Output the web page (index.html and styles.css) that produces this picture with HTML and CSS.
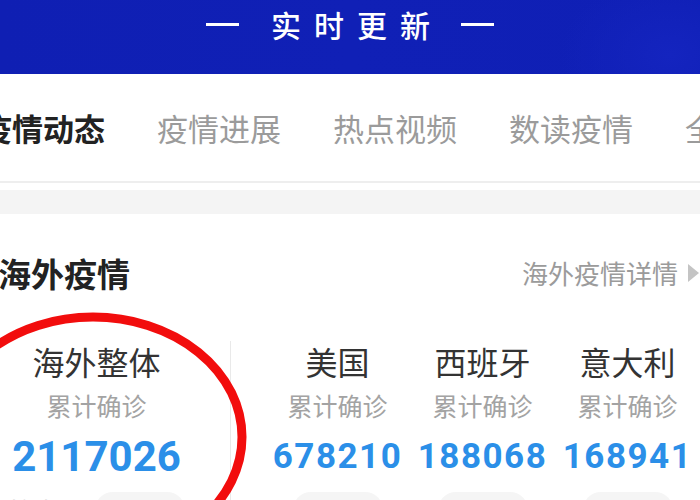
FILE: index.html
```html
<!DOCTYPE html>
<html lang="zh-CN">
<head>
<meta charset="utf-8">
<title>实时更新</title>
<link rel="stylesheet" href="styles.css">
</head>
<body>
<div class="page">
  <header class="banner">
    <span class="dash"></span>
    <span class="banner-text">实时更新</span>
    <span class="dash"></span>
  </header>

  <nav class="tabs">
    <span class="tab active">疫情动态</span>
    <span class="tab">疫情进展</span>
    <span class="tab">热点视频</span>
    <span class="tab">数读疫情</span>
    <span class="tab">全部</span>
  </nav>

  <div class="band"></div>

  <section class="overseas">
    <div class="title-row">
      <h2 class="title">海外疫情</h2>
      <a class="more">海外疫情详情<span class="tri"></span></a>
    </div>

    <div class="stats">
      <div class="col main">
        <div class="name">海外整体</div>
        <div class="sub">累计确诊</div>
        <div class="num big">2117026</div>
        <div class="delta-row"><span class="delta-label">较昨日</span><span class="pill"></span></div>
      </div>
      <div class="countries">
        <div class="col">
          <div class="name">美国</div>
          <div class="sub">累计确诊</div>
          <div class="num">678210</div>
          <div class="delta-row"><span class="pill"></span></div>
        </div>
        <div class="col">
          <div class="name">西班牙</div>
          <div class="sub">累计确诊</div>
          <div class="num">188068</div>
          <div class="delta-row"><span class="pill"></span></div>
        </div>
        <div class="col">
          <div class="name">意大利</div>
          <div class="sub">累计确诊</div>
          <div class="num">168941</div>
          <div class="delta-row"><span class="pill"></span></div>
        </div>
      </div>
    </div>

    <svg class="circle" width="320" height="260" viewBox="0 0 320 260" aria-hidden="true">
      <ellipse cx="121" cy="125" rx="149" ry="120" fill="none" stroke="#f20d0d" stroke-width="9"/>
    </svg>
  </section>
</div>
</body>
</html>
```

FILE: styles.css
```css
* { box-sizing: border-box; }
html, body {
  margin: 0;
  padding: 0;
  background: #ffffff;
}
body {
  width: 700px;
  height: 500px;
  overflow: hidden;
  font-family: "Noto Sans CJK SC", "Noto Sans", sans-serif;
}
.page {
  position: relative;
  width: 700px;
}

/* banner */
.banner {
  height: 74px;
  padding-bottom: 27px;
  display: flex;
  align-items: center;
  justify-content: center;
  gap: 31px;
  background: radial-gradient(ellipse 110px 80px at 670px 55px, #1424bf 0%, rgba(20,36,191,0) 100%),
              linear-gradient(90deg, #0f1fb3 0%, #1020b6 50%, #0f1fb5 100%);
}
.dash {
  width: 33px;
  height: 3px;
  background: #ffffff;
  margin-top: 2px;
}
.banner-text {
  color: #ffffff;
  font-size: 30px;
  line-height: 40px;
  font-weight: 500;
  letter-spacing: 13px;
  margin-right: -13px;
  margin-left: 1px;
}

/* tabs */
.tabs {
  height: 109px;
  display: flex;
  align-items: center;
  gap: 52px;
  margin-left: -19px;
  border-bottom: 2px solid #eeeeee;
  white-space: nowrap;
}
.tab {
  font-size: 31px;
  line-height: 40px;
  color: #9b9b9b;
  flex: none;
}
.tab.active {
  color: #222222;
  font-weight: 700;
}

.band {
  margin-top: 7px;
  height: 24px;
  background: #f4f4f4;
}

/* overseas section */
.overseas {
  position: relative;
  padding-top: 39px;
}
.title-row {
  display: flex;
  align-items: center;
  height: 40px;
}
.title {
  margin: 0 0 0 -2px;
  font-size: 33px;
  line-height: 40px;
  font-weight: 700;
  color: #222222;
}
.more {
  margin-left: auto;
  display: flex;
  align-items: center;
  font-size: 26px;
  line-height: 36px;
  color: #9b9b9b;
  margin-right: 1px;
}
.tri {
  width: 0;
  height: 0;
  margin-left: 10px;
  border-left: 11px solid #c4c4c4;
  border-top: 9px solid transparent;
  border-bottom: 9px solid transparent;
}

.stats {
  display: flex;
  margin-top: 48px;
}
.col {
  display: flex;
  flex-direction: column;
  align-items: center;
}
.col.main {
  width: 231px;
  padding-right: 37px;
  border-right: 1px solid #e9e9e9;
}
.countries {
  display: flex;
  padding-left: 34px;
}
.countries .col {
  width: 145px;
}
.name {
  font-size: 32px;
  line-height: 40px;
  color: #333333;
  white-space: nowrap;
}
.sub {
  margin-top: 6px;
  font-size: 25px;
  line-height: 36px;
  color: #a3a3a3;
  white-space: nowrap;
}
.num {
  margin-top: 10px;
  font-family: Roboto, "Noto Sans", sans-serif;
  font-size: 35px;
  line-height: 48px;
  font-weight: 700;
  color: #2b8fe8;
  letter-spacing: 1.5px;
}
.num.big {
  font-size: 42px;
  letter-spacing: 0;
}
.delta-row {
  margin-top: 11px;
  display: flex;
  align-items: center;
  gap: 14px;
}
.delta-label {
  font-size: 24px;
  line-height: 36px;
  color: #c4c4c4;
}
.pill {
  width: 90px;
  height: 36px;
  border-radius: 18px;
  background: #f5f5f5;
}

.circle {
  position: absolute;
  left: -28px;
  top: 98px;
  overflow: visible;
  pointer-events: none;
}
```
